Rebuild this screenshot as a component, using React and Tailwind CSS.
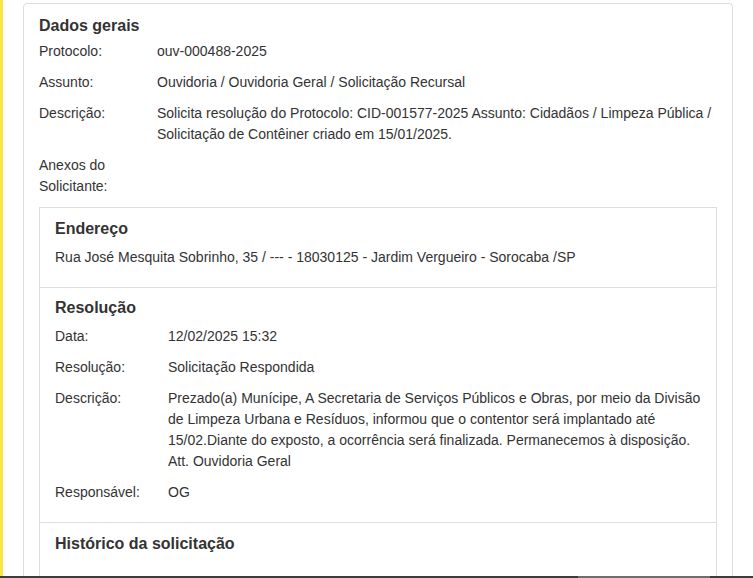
export default function App() {
  const dados = [
    ['Protocolo:', 'ouv-000488-2025'],
    ['Assunto:', 'Ouvidoria / Ouvidoria Geral / Solicitação Recursal'],
    [
      'Descrição:',
      'Solicita resolução do Protocolo: CID-001577-2025 Assunto: Cidadãos / Limpeza Pública / Solicitação de Contêiner criado em 15/01/2025.',
    ],
    ['Anexos do Solicitante:', ''],
  ];

  const resolucao = [
    ['Data:', '12/02/2025 15:32'],
    ['Resolução:', 'Solicitação Respondida'],
    [
      'Descrição:',
      'Prezado(a) Munícipe, A Secretaria de Serviços Públicos e Obras, por meio da Divisão de Limpeza Urbana e Resíduos, informou que o contentor será implantado até 15/02.Diante do exposto, a ocorrência será finalizada. Permanecemos à disposição. Att. Ouvidoria Geral',
    ],
    ['Responsável:', 'OG'],
  ];

  return (
    <div
      className="h-[578px] flex flex-col overflow-hidden bg-white text-[#333] text-[14px] leading-[21px]"
      style={{ fontFamily: '"Liberation Sans", Arial, sans-serif' }}
    >
      <div className="flex-1 flex min-h-0">
        <div className="w-[3px] bg-[#fde440] shrink-0" />
        <div className="flex-1 pl-[20px] pr-[20px] pt-[3px] min-w-0">
          <div className="border border-[#dddddd] rounded-t-[4px] px-[15px] pt-[12px] pb-[15px]">
            <h2 className="font-bold text-[16px] leading-[20px] mb-[5px]">Dados gerais</h2>
            {dados.map(([label, value]) => (
              <div key={label} className="flex mb-[10px]">
                <div className="w-[118px] shrink-0 pr-[10px]">{label}</div>
                <div className="flex-1">{value}</div>
              </div>
            ))}

            <div className="border border-[#dddddd] mt-[10px]">
              <div className="px-[15px] pt-[11px] pb-[9px]">
                <h3 className="font-bold text-[16px] leading-[20px] mb-[8px]">Endereço</h3>
                <p className="mb-[10px]">
                  Rua José Mesquita Sobrinho, 35 / --- - 18030125 - Jardim Vergueiro - Sorocaba /SP
                </p>
              </div>

              <div className="border-t border-[#dddddd] px-[15px] pt-[10px] pb-[9px]">
                <h3 className="font-bold text-[16px] leading-[20px] mb-[8px]">Resolução</h3>
                {resolucao.map(([label, value]) => (
                  <div key={label} className="flex mb-[10px]">
                    <div className="w-[113px] shrink-0 pr-[10px]">{label}</div>
                    <div className="flex-1">{value}</div>
                  </div>
                ))}
              </div>

              <div className="border-t border-[#dddddd] px-[15px] pt-[11px] pb-[40px]">
                <h3 className="font-bold text-[16px] leading-[20px]">Histórico da solicitação</h3>
              </div>
            </div>
          </div>
        </div>
      </div>
      <div className="h-[2px] shrink-0 flex">
        <div className="w-[578px] bg-[#3c3c3c]" />
        <div className="w-[132px] bg-[#6e6e6e]" />
        <div className="flex-1 bg-[#3c3c3c]" />
      </div>
    </div>
  );
}
